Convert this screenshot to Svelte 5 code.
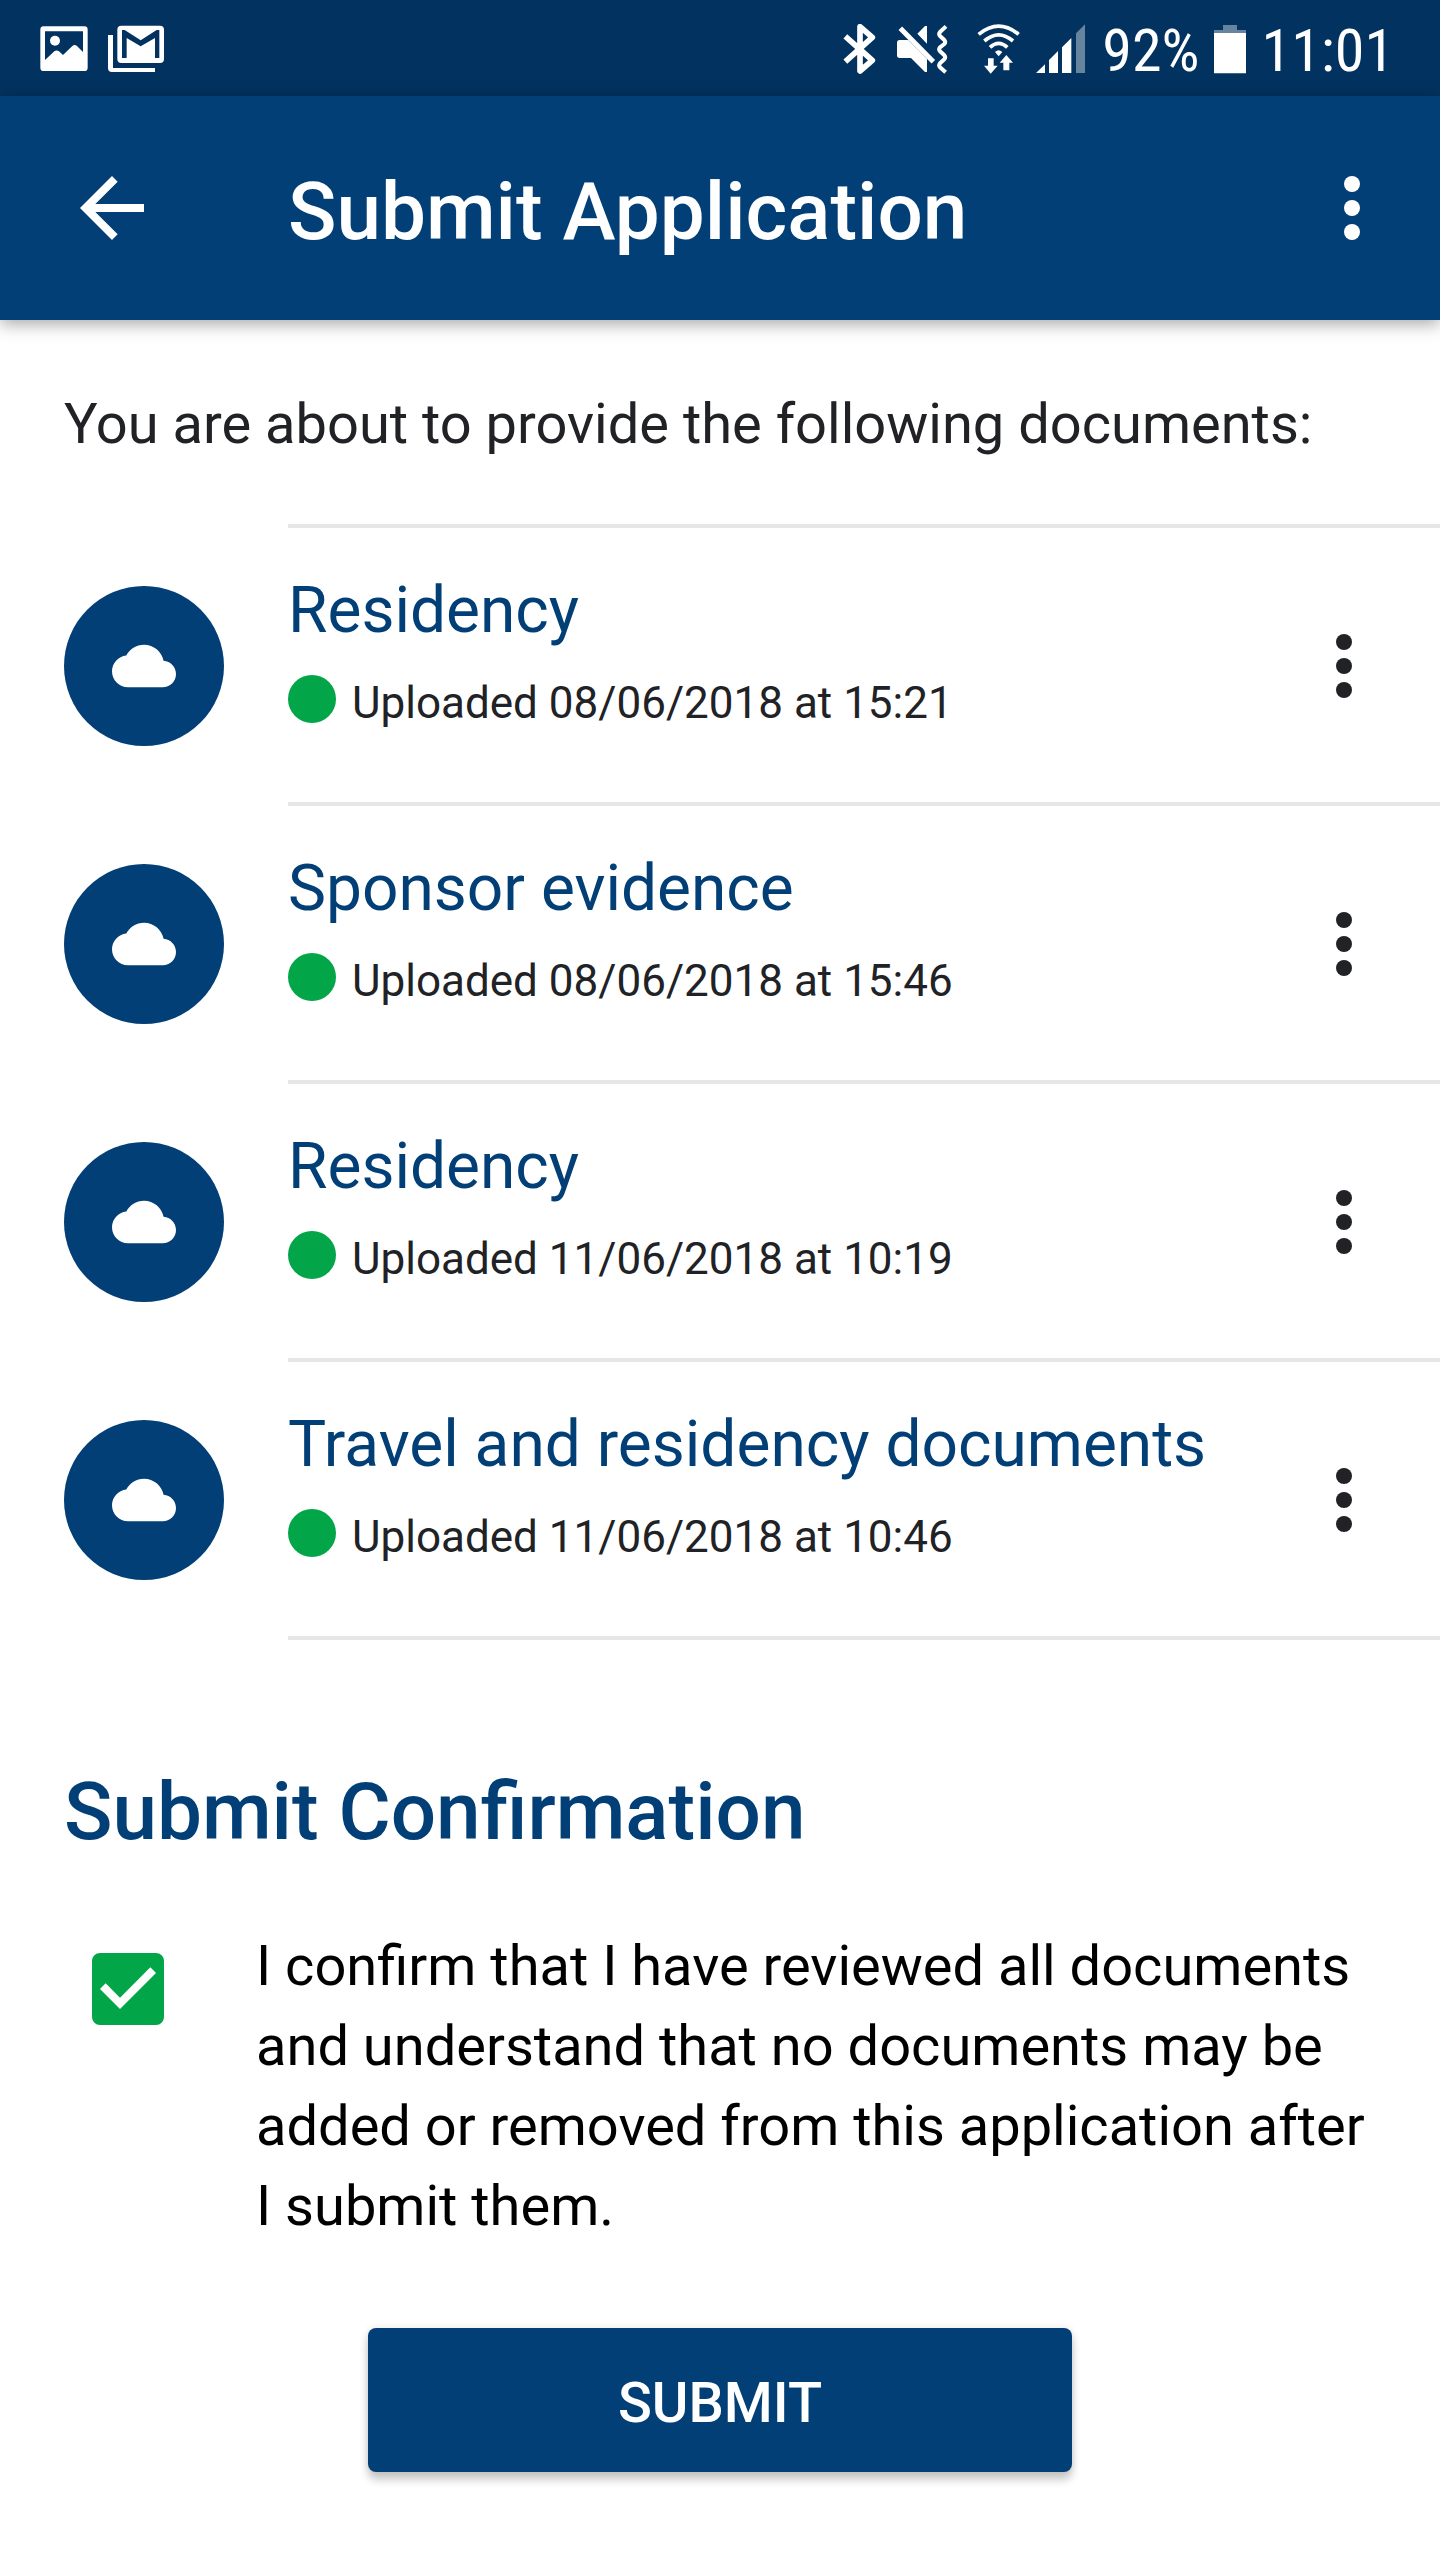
<script>
  const documents = [
    { title: "Residency", uploaded: "08/06/2018 at 15:21" },
    { title: "Sponsor evidence", uploaded: "08/06/2018 at 15:46" },
    { title: "Residency", uploaded: "11/06/2018 at 10:19" },
    { title: "Travel and residency documents", uploaded: "11/06/2018 at 10:46" }
  ];

  let confirmed = $state(true);
</script>

{#snippet dots()}
  <svg class="dots" viewBox="0 0 16 64" aria-hidden="true">
    <circle cx="8" cy="8" r="8" />
    <circle cx="8" cy="32" r="8" />
    <circle cx="8" cy="56" r="8" />
  </svg>
{/snippet}

<div class="status">
  <div class="notifications">
    <svg width="48" height="50" viewBox="120 72 144 150">
      <path fill-rule="evenodd" d="M131 79H253q10 0 10 10V203q0 10-10 10H131q-10 0-10-10V89q0-10 10-10zM135 94V180L163 154q7-5 14 0L189 165 217 138q7-6 14 0L249 156V94z" />
      <circle cx="165" cy="122" r="15" />
    </svg>
    <svg width="56" height="50" viewBox="324 72 168 150">
      <path d="M324 105H339V204H465V216H336q-12 0-12-12z" />
      <path fill-rule="evenodd" d="M364 77H480q12 0 12 12V177q0 12-12 12H364q-12 0-12-12V89q0-12 12-12zM366 90V174H380V114L422 139 465 114V174H478V90H470L422 121 374 90z" />
    </svg>
  </div>
  <div class="system">
    <svg width="36" height="50" viewBox="63 72 108 150">
      <path class="line" stroke-width="17" d="M73 109 154 181 117 213V80L154 112 73 185" />
    </svg>
    <svg width="58" height="50" viewBox="219 72 174 150">
      <path d="M236 120H262L318 176V216H312L270 174H236q-8 0-8-8V128q0-8 8-8zM289 101 312 78H318V131z" />
      <path class="line" stroke-width="15" stroke-linecap="butt" d="M238 85 337 185" />
      <path class="line" stroke-width="12" stroke-linecap="butt" d="M375 79 357 96Q352 102 357 108L370 120Q375 126 370 132L357 142Q352 148 357 154L370 166Q375 172 370 178L357 190Q352 196 357 202L374 217" />
    </svg>
    <svg width="52" height="50" viewBox="441 72 156 150">
      <path class="line" stroke-width="11" stroke-linecap="butt" d="M473 103Q533 54 593 103M490 123Q533 86 576 123M507 142Q533 118 559 142" />
      <path d="M522 156Q533 146 544 156L533 169zM501 175H518V197H530L509 221 489 197H501zM556 165 576 188H565V211H547V188H536z" />
    </svg>
    <svg width="50" height="50" viewBox="645 72 150 150">
      <path d="M645 219 672 193V219zM684 180 711 153V219H684zM723 142 751 114V219H723z" />
      <path opacity="0.4" d="M765 100 792 73V219H765z" />
    </svg>
    <div class="battery">
      <span>92%</span>
      <svg width="32" height="50" viewBox="342 72 96 150">
        <path opacity="0.4" d="M369 75H411V90H438V99H342V90H369z" />
        <path d="M342 99H438V220H342z" />
      </svg>
    </div>
    <time>11:01</time>
  </div>
</div>

<header>
  <button class="back" aria-label="Back">
    <svg width="96" height="96" viewBox="0 0 24 24">
      <path d="M20 11H7.83l5.59-5.59L12 4l-8 8 8 8 1.41-1.41L7.83 13H20v-2z" />
    </svg>
  </button>
  <h1>Submit Application</h1>
  <button class="more" aria-label="More options">{@render dots()}</button>
</header>

<main>
  <p class="intro">You are about to provide the following documents:</p>

  <ul>
    {#each documents as doc}
      <li>
        <div class="avatar">
          <svg width="64" height="64" viewBox="0 0 24 24">
            <path d="M19.35 10.04C18.67 6.59 15.64 4 12 4 9.11 4 6.6 5.64 5.35 8.04 2.34 8.36 0 10.91 0 14c0 3.31 2.69 6 6 6h13c2.76 0 5-2.24 5-5 0-2.64-2.05-4.78-4.65-4.96z" />
          </svg>
        </div>
        <div class="row">
          <div class="info">
            <h3>{doc.title}</h3>
            <p><i></i>Uploaded {doc.uploaded}</p>
          </div>
          <button class="menu" aria-label="Options for {doc.title}">{@render dots()}</button>
        </div>
      </li>
    {/each}
  </ul>

  <h2>Submit Confirmation</h2>

  <div class="confirm">
    <div class="box">
      <input type="checkbox" id="confirm" bind:checked={confirmed} />
      {#if confirmed}
        <svg width="72" height="72" viewBox="3 3 18 18" aria-hidden="true">
          <path d="M10 17l-5-5 1.41-1.41L10 14.17l7.59-7.59L19 8z" />
        </svg>
      {/if}
    </div>
    <label for="confirm">
      I confirm that I have reviewed all documents and understand that no
      documents may be added or removed from this application after I submit
      them.
    </label>
  </div>

  <button class="submit" disabled={!confirmed}>SUBMIT</button>
</main>

<style>
  :global(body) {
    background: #fff;
    color: #212226;
    font-family: Roboto, "Liberation Sans", sans-serif;
  }
  h1, h2, h3, p, ul {
    margin: 0;
    padding: 0;
  }
  button {
    border: 0;
    padding: 0;
    background: none;
    color: inherit;
    font-family: inherit;
    cursor: pointer;
  }
  svg {
    display: block;
    flex: none;
    fill: currentColor;
  }
  .line {
    fill: none;
    stroke: currentColor;
    stroke-linejoin: round;
  }

  .status {
    display: flex;
    justify-content: space-between;
    height: 94px;
    padding: 2px 46px 0 40px;
    background: #02325f;
    color: #fff;
  }
  .notifications, .system, .battery {
    display: flex;
    align-items: center;
    gap: 20px;
  }
  .system {
    gap: 16px;
    font-family: "Roboto Condensed", Roboto, sans-serif;
    font-size: 60px;
    line-height: 72px;
  }
  .battery {
    gap: 14px;
  }
  span, time {
    padding-top: 4px;
  }

  header {
    display: flex;
    align-items: center;
    height: 224px;
    background: #023f76;
    color: #fff;
    box-shadow: 0 4px 16px rgba(0, 0, 0, 0.35);
  }
  .back {
    display: flex;
    justify-content: center;
    width: 224px;
    margin-right: 64px;
  }
  h1 {
    flex: 1;
    padding-top: 8px;
    font-size: 80px;
    font-weight: 500;
    line-height: 96px;
  }
  .dots {
    height: 64px;
    width: 16px;
    margin: 0 auto;
  }
  .more {
    width: 176px;
    height: 176px;
  }

  .intro {
    padding: 64px 64px 60px;
    font-size: 56px;
    line-height: 80px;
  }
  ul {
    list-style: none;
  }
  li {
    display: flex;
  }
  .avatar {
    display: flex;
    flex: none;
    align-items: center;
    justify-content: center;
    width: 160px;
    height: 160px;
    margin: 62px 64px 0;
    border-radius: 50%;
    background: #023f76;
    color: #fff;
  }
  .row {
    display: flex;
    flex: 1;
    align-items: center;
    border-top: 4px solid #e6e6e6;
  }
  li:last-child .row {
    border-bottom: 4px solid #e6e6e6;
  }
  .info {
    flex: 1;
    padding: 43px 0 71px;
  }
  h3 {
    color: #023f76;
    font-size: 64px;
    font-weight: 400;
    line-height: 80px;
  }
  .info p {
    display: flex;
    gap: 16px;
    margin-top: 24px;
    font-size: 44px;
    line-height: 56px;
  }
  i {
    width: 48px;
    height: 48px;
    border-radius: 50%;
    background: #02a548;
  }
  .menu {
    width: 192px;
    height: 192px;
    padding-top: 2px;
  }

  h2 {
    padding: 124px 64px 66px;
    color: #023f76;
    font-size: 80px;
    font-weight: 500;
    line-height: 96px;
  }
  .confirm {
    display: flex;
    gap: 92px;
    padding: 0 64px 0 92px;
    color: #000;
  }
  .box {
    display: grid;
    flex: none;
    height: 72px;
    margin-top: 27px;
    color: #fff;
  }
  .box > * {
    grid-area: 1 / 1;
  }
  .box svg {
    pointer-events: none;
  }
  input {
    appearance: none;
    width: 72px;
    height: 72px;
    margin: 0;
    border: 8px solid #02a548;
    border-radius: 8px;
  }
  input:checked {
    background: #02a548;
  }
  label {
    font-size: 56px;
    line-height: 80px;
  }
  .submit {
    display: block;
    min-width: 704px;
    height: 144px;
    margin: 82px auto 86px;
    padding-top: 6px;
    border-radius: 8px;
    background: #023f76;
    box-shadow: 0 8px 8px rgba(0, 0, 0, 0.2), 0 0 8px rgba(0, 0, 0, 0.1);
    color: #fff;
    font-size: 56px;
    font-weight: 500;
  }
</style>
